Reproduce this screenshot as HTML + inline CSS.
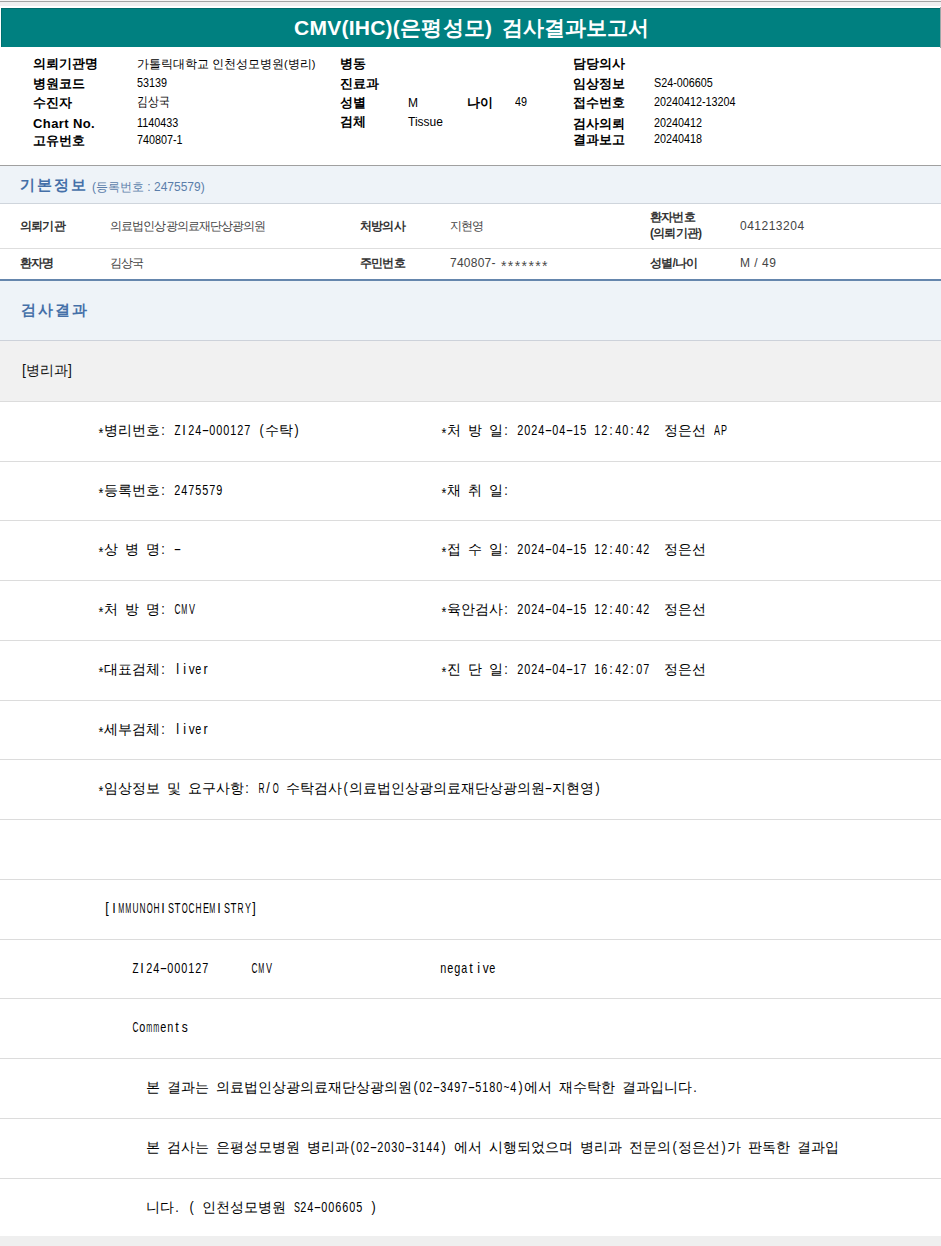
<!DOCTYPE html>
<html><head><meta charset="utf-8"><style>
html,body{margin:0;padding:0;background:#fff;}
body{width:941px;height:1246px;position:relative;overflow:hidden;font-family:"Liberation Sans",sans-serif;}
.m{position:absolute;white-space:nowrap;font-size:14px;}
.m i{display:inline-flex;justify-content:center;width:7px;font-style:normal;white-space:pre;}
.m u{display:inline-flex;justify-content:center;width:14px;text-decoration:none;}
.m s{display:inline-block;flex:none;text-decoration:none;font-family:"Liberation Sans",sans-serif;font-size:15px;transform-origin:50% 0;}
</style></head><body>
<div style="position:absolute;left:0px;top:0px;width:941px;height:1px;background:#f6f4f4"></div>
<div style="position:absolute;left:0px;top:1px;width:941px;height:1px;background:#a3a3a3"></div>
<div style="position:absolute;left:0px;top:2px;width:941px;height:4px;background:#efeff0"></div>
<div style="position:absolute;left:1px;top:8px;width:939px;height:39px;background:#008080"></div>
<div style="position:absolute;left:1px;top:8px;width:939px;height:1px;background:#006c6c"></div>
<div style="position:absolute;left:1px;top:8px;width:1px;height:39px;background:#007070"></div>
<div style="position:absolute;left:940px;top:7px;width:1px;height:41px;background:#9aa8a8"></div>
<div style="position:absolute;left:294px;top:16px;line-height:24px;white-space:pre;color:#fff;font-weight:bold;letter-spacing:0.25px;font-size:21px;"><span style="font-size:21px;font-family:'Liberation Sans',sans-serif">CMV(IHC)(</span><span style="font-size:21px">은평성모</span><span style="font-size:21px;font-family:'Liberation Sans',sans-serif">)</span></div>
<div style="position:absolute;left:502px;top:16px;line-height:24px;white-space:pre;color:#fff;font-weight:bold;letter-spacing:0px;font-size:21px;"><span style="font-size:21px">검사결과보고서</span></div>
<div style="position:absolute;left:33px;top:57px;line-height:14px;white-space:pre;color:#000;font-weight:bold;letter-spacing:0px;font-size:13px;"><span style="font-size:13px">의뢰기관명</span></div>
<div style="position:absolute;left:137px;top:57px;line-height:14px;white-space:pre;color:#000;font-weight:normal;letter-spacing:0px;font-size:12px;"><span style="font-size:12px">가톨릭대학교</span><span style="font-size:11px;font-family:'Liberation Sans',sans-serif"> </span><span style="font-size:12px">인천성모병원</span><span style="font-size:11px;font-family:'Liberation Sans',sans-serif">(</span><span style="font-size:12px">병리</span><span style="font-size:11px;font-family:'Liberation Sans',sans-serif">)</span></div>
<div style="position:absolute;left:33px;top:77px;line-height:14px;white-space:pre;color:#000;font-weight:bold;letter-spacing:0px;font-size:13px;"><span style="font-size:13px">병원코드</span></div>
<div style="position:absolute;left:137px;top:76px;line-height:14px;white-space:pre;color:#000;font-weight:normal;letter-spacing:0px;font-size:13px;transform:scaleX(0.83);transform-origin:0 0;"><span style="font-size:13px;font-family:'Liberation Sans',sans-serif">53139</span></div>
<div style="position:absolute;left:33px;top:96px;line-height:14px;white-space:pre;color:#000;font-weight:bold;letter-spacing:0px;font-size:13px;"><span style="font-size:13px">수진자</span></div>
<div style="position:absolute;left:137px;top:95px;line-height:14px;white-space:pre;color:#000;font-weight:normal;letter-spacing:0px;font-size:13px;transform:scaleX(0.83);transform-origin:0 0;"><span style="font-size:13px">김상국</span></div>
<div style="position:absolute;left:33px;top:117px;line-height:14px;white-space:pre;color:#000;font-weight:bold;letter-spacing:0.4px;font-size:13px;"><span style="font-size:13px;font-family:'Liberation Sans',sans-serif">Chart No.</span></div>
<div style="position:absolute;left:137px;top:116px;line-height:14px;white-space:pre;color:#000;font-weight:normal;letter-spacing:0px;font-size:13px;transform:scaleX(0.83);transform-origin:0 0;"><span style="font-size:13px;font-family:'Liberation Sans',sans-serif">1140433</span></div>
<div style="position:absolute;left:33px;top:134px;line-height:14px;white-space:pre;color:#000;font-weight:bold;letter-spacing:0px;font-size:13px;"><span style="font-size:13px">고유번호</span></div>
<div style="position:absolute;left:137px;top:133px;line-height:14px;white-space:pre;color:#000;font-weight:normal;letter-spacing:0px;font-size:13px;transform:scaleX(0.83);transform-origin:0 0;"><span style="font-size:13px;font-family:'Liberation Sans',sans-serif">740807-1</span></div>
<div style="position:absolute;left:340px;top:57px;line-height:14px;white-space:pre;color:#000;font-weight:bold;letter-spacing:0px;font-size:13px;"><span style="font-size:13px">병동</span></div>
<div style="position:absolute;left:340px;top:77px;line-height:14px;white-space:pre;color:#000;font-weight:bold;letter-spacing:0px;font-size:13px;"><span style="font-size:13px">진료과</span></div>
<div style="position:absolute;left:340px;top:96px;line-height:14px;white-space:pre;color:#000;font-weight:bold;letter-spacing:0px;font-size:13px;"><span style="font-size:13px">성별</span></div>
<div style="position:absolute;left:340px;top:115px;line-height:14px;white-space:pre;color:#000;font-weight:bold;letter-spacing:0px;font-size:13px;"><span style="font-size:13px">검체</span></div>
<div style="position:absolute;left:408px;top:96px;line-height:14px;white-space:pre;color:#000;font-weight:normal;letter-spacing:0px;font-size:12px;"><span style="font-size:12px;font-family:'Liberation Sans',sans-serif">M</span></div>
<div style="position:absolute;left:467px;top:96px;line-height:14px;white-space:pre;color:#000;font-weight:bold;letter-spacing:0px;font-size:13px;"><span style="font-size:13px">나이</span></div>
<div style="position:absolute;left:515px;top:95px;line-height:14px;white-space:pre;color:#000;font-weight:normal;letter-spacing:0px;font-size:13px;transform:scaleX(0.83);transform-origin:0 0;"><span style="font-size:13px;font-family:'Liberation Sans',sans-serif">49</span></div>
<div style="position:absolute;left:408px;top:115px;line-height:14px;white-space:pre;color:#000;font-weight:normal;letter-spacing:0px;font-size:12px;"><span style="font-size:12px;font-family:'Liberation Sans',sans-serif">Tissue</span></div>
<div style="position:absolute;left:573px;top:57px;line-height:14px;white-space:pre;color:#000;font-weight:bold;letter-spacing:0px;font-size:13px;"><span style="font-size:13px">담당의사</span></div>
<div style="position:absolute;left:573px;top:77px;line-height:14px;white-space:pre;color:#000;font-weight:bold;letter-spacing:0px;font-size:13px;"><span style="font-size:13px">임상정보</span></div>
<div style="position:absolute;left:654px;top:76px;line-height:14px;white-space:pre;color:#000;font-weight:normal;letter-spacing:0px;font-size:13px;transform:scaleX(0.83);transform-origin:0 0;"><span style="font-size:13px;font-family:'Liberation Sans',sans-serif">S24-006605</span></div>
<div style="position:absolute;left:573px;top:96px;line-height:14px;white-space:pre;color:#000;font-weight:bold;letter-spacing:0px;font-size:13px;"><span style="font-size:13px">접수번호</span></div>
<div style="position:absolute;left:654px;top:95px;line-height:14px;white-space:pre;color:#000;font-weight:normal;letter-spacing:0px;font-size:13px;transform:scaleX(0.83);transform-origin:0 0;"><span style="font-size:13px;font-family:'Liberation Sans',sans-serif">20240412-13204</span></div>
<div style="position:absolute;left:573px;top:117px;line-height:14px;white-space:pre;color:#000;font-weight:bold;letter-spacing:0px;font-size:13px;"><span style="font-size:13px">검사의뢰</span></div>
<div style="position:absolute;left:654px;top:116px;line-height:14px;white-space:pre;color:#000;font-weight:normal;letter-spacing:0px;font-size:13px;transform:scaleX(0.83);transform-origin:0 0;"><span style="font-size:13px;font-family:'Liberation Sans',sans-serif">20240412</span></div>
<div style="position:absolute;left:573px;top:133px;line-height:14px;white-space:pre;color:#000;font-weight:bold;letter-spacing:0px;font-size:13px;"><span style="font-size:13px">결과보고</span></div>
<div style="position:absolute;left:654px;top:132px;line-height:14px;white-space:pre;color:#000;font-weight:normal;letter-spacing:0px;font-size:13px;transform:scaleX(0.83);transform-origin:0 0;"><span style="font-size:13px;font-family:'Liberation Sans',sans-serif">20240418</span></div>
<div style="position:absolute;left:0px;top:165px;width:941px;height:1px;background:#a0a0a0"></div>
<div style="position:absolute;left:0px;top:166px;width:941px;height:37px;background:#eef3f8"></div>
<div style="position:absolute;left:0px;top:203px;width:941px;height:1px;background:#cfd5dc"></div>
<div style="position:absolute;left:20px;top:177px;line-height:16px;white-space:pre;color:#4570a8;font-weight:bold;letter-spacing:1.9px;font-size:15px;"><span style="font-size:15px">기본정보</span></div>
<div style="position:absolute;left:92px;top:180px;line-height:14px;white-space:pre;color:#5b7eaa;font-weight:normal;letter-spacing:0px;font-size:12px;"><span style="font-size:12px;font-family:'Liberation Sans',sans-serif">(</span><span style="font-size:12px">등록번호</span><span style="font-size:12px;font-family:'Liberation Sans',sans-serif"> : 2475579)</span></div>
<div style="position:absolute;left:0px;top:248px;width:941px;height:1px;background:#dedede"></div>
<div style="position:absolute;left:20px;top:219px;line-height:14px;white-space:pre;color:#333;font-weight:bold;letter-spacing:-0.8px;font-size:12px;"><span style="font-size:12px">의뢰기관</span></div>
<div style="position:absolute;left:110px;top:219px;line-height:14px;white-space:pre;color:#444;font-weight:normal;letter-spacing:-0.9px;font-size:12px;"><span style="font-size:12px">의료법인상광의료재단상광의원</span></div>
<div style="position:absolute;left:360px;top:219px;line-height:14px;white-space:pre;color:#333;font-weight:bold;letter-spacing:-0.8px;font-size:12px;"><span style="font-size:12px">처방의사</span></div>
<div style="position:absolute;left:450px;top:219px;line-height:14px;white-space:pre;color:#444;font-weight:normal;letter-spacing:-0.9px;font-size:12px;"><span style="font-size:12px">지현영</span></div>
<div style="position:absolute;left:650px;top:210px;line-height:14px;white-space:pre;color:#333;font-weight:bold;letter-spacing:-0.8px;font-size:12px;"><span style="font-size:12px">환자번호</span></div>
<div style="position:absolute;left:650px;top:226px;line-height:14px;white-space:pre;color:#333;font-weight:bold;letter-spacing:-0.8px;font-size:12px;"><span style="font-size:12px;font-family:'Liberation Sans',sans-serif">(</span><span style="font-size:12px">의뢰기관</span><span style="font-size:12px;font-family:'Liberation Sans',sans-serif">)</span></div>
<div style="position:absolute;left:740px;top:219px;line-height:14px;white-space:pre;color:#444;font-weight:normal;letter-spacing:0.5px;font-size:12px;"><span style="font-size:12px;font-family:'Liberation Sans',sans-serif">041213204</span></div>
<div style="position:absolute;left:20px;top:256px;line-height:14px;white-space:pre;color:#333;font-weight:bold;letter-spacing:-0.8px;font-size:12px;"><span style="font-size:12px">환자명</span></div>
<div style="position:absolute;left:110px;top:256px;line-height:14px;white-space:pre;color:#444;font-weight:normal;letter-spacing:-0.9px;font-size:12px;"><span style="font-size:12px">김상국</span></div>
<div style="position:absolute;left:360px;top:256px;line-height:14px;white-space:pre;color:#333;font-weight:bold;letter-spacing:-0.8px;font-size:12px;"><span style="font-size:12px">주민번호</span></div>
<div style="position:absolute;left:450px;top:256px;line-height:14px;white-space:pre;color:#444;font-weight:normal;letter-spacing:0.25px;font-size:12px;"><span style="font-size:12px;font-family:'Liberation Sans',sans-serif">740807-</span></div>
<div style="position:absolute;left:501px;top:259px;line-height:14px;white-space:pre;color:#4a4a4a;font-weight:normal;letter-spacing:1.4px;font-size:11.25px;"><span style="font-size:14px;font-family:'Liberation Sans',sans-serif">*******</span></div>
<div style="position:absolute;left:650px;top:256px;line-height:14px;white-space:pre;color:#333;font-weight:bold;letter-spacing:-0.8px;font-size:12px;"><span style="font-size:12px">성별</span><span style="font-size:12px;font-family:'Liberation Sans',sans-serif">/</span><span style="font-size:12px">나이</span></div>
<div style="position:absolute;left:740px;top:256px;line-height:14px;white-space:pre;color:#444;font-weight:normal;letter-spacing:0.5px;font-size:12px;"><span style="font-size:12px;font-family:'Liberation Sans',sans-serif">M / 49</span></div>
<div style="position:absolute;left:0px;top:279px;width:941px;height:2px;background:#6586ad"></div>
<div style="position:absolute;left:0px;top:281px;width:941px;height:59px;background:#eef3f8"></div>
<div style="position:absolute;left:0px;top:340px;width:941px;height:1px;background:#cdd2da"></div>
<div style="position:absolute;left:21px;top:302px;line-height:16px;white-space:pre;color:#4570a8;font-weight:bold;letter-spacing:1.9px;font-size:15px;"><span style="font-size:15px">검사결과</span></div>
<div style="position:absolute;left:0px;top:341px;width:941px;height:60px;background:#f1f1f1"></div>
<div style="position:absolute;left:22px;top:362px;line-height:16px;white-space:pre;color:#111;font-weight:normal;letter-spacing:0px;font-size:14px;"><span style="font-size:14px;font-family:'Liberation Sans',sans-serif">[</span><span style="font-size:14px">병리과</span><span style="font-size:14px;font-family:'Liberation Sans',sans-serif">]</span></div>
<div style="position:absolute;left:0px;top:401px;width:941px;height:1px;background:#dcdcdc"></div>
<div style="position:absolute;left:0px;top:461px;width:941px;height:1px;background:#dcdcdc"></div>
<div style="position:absolute;left:0px;top:520px;width:941px;height:1px;background:#dcdcdc"></div>
<div style="position:absolute;left:0px;top:580px;width:941px;height:1px;background:#dcdcdc"></div>
<div style="position:absolute;left:0px;top:640px;width:941px;height:1px;background:#dcdcdc"></div>
<div style="position:absolute;left:0px;top:700px;width:941px;height:1px;background:#dcdcdc"></div>
<div style="position:absolute;left:0px;top:759px;width:941px;height:1px;background:#dcdcdc"></div>
<div style="position:absolute;left:0px;top:819px;width:941px;height:1px;background:#dcdcdc"></div>
<div style="position:absolute;left:0px;top:879px;width:941px;height:1px;background:#dcdcdc"></div>
<div style="position:absolute;left:0px;top:939px;width:941px;height:1px;background:#dcdcdc"></div>
<div style="position:absolute;left:0px;top:998px;width:941px;height:1px;background:#dcdcdc"></div>
<div style="position:absolute;left:0px;top:1058px;width:941px;height:1px;background:#dcdcdc"></div>
<div style="position:absolute;left:0px;top:1118px;width:941px;height:1px;background:#dcdcdc"></div>
<div style="position:absolute;left:0px;top:1178px;width:941px;height:1px;background:#dcdcdc"></div>
<div style="position:absolute;left:0px;top:1236px;width:941px;height:10px;background:#efefef"></div>
<div class="m" style="left:97px;top:423px;line-height:14px;color:#000"><i><s style="transform:scaleX(0.84) translateY(3px)">*</s></i><u>병</u><u>리</u><u>번</u><u>호</u><i><s style="transform:scaleX(0.84)">:</s></i><i> </i><i><s style="transform:scaleX(0.652)">Z</s></i><i><s style="transform:scaleX(0.84)">I</s></i><i><s style="transform:scaleX(0.723)">2</s></i><i><s style="transform:scaleX(0.723)">4</s></i><i><s style="transform:scaleX(1.5)">-</s></i><i><s style="transform:scaleX(0.723)">0</s></i><i><s style="transform:scaleX(0.723)">0</s></i><i><s style="transform:scaleX(0.723)">0</s></i><i><s style="transform:scaleX(0.723)">1</s></i><i><s style="transform:scaleX(0.723)">2</s></i><i><s style="transform:scaleX(0.723)">7</s></i><i> </i><i><s style="transform:scaleX(0.84)">(</s></i><u>수</u><u>탁</u><i><s style="transform:scaleX(0.84)">)</s></i></div>
<div class="m" style="left:440px;top:423px;line-height:14px;color:#000"><i><s style="transform:scaleX(0.84) translateY(3px)">*</s></i><u>처</u><i> </i><u>방</u><i> </i><u>일</u><i><s style="transform:scaleX(0.84)">:</s></i><i> </i><i><s style="transform:scaleX(0.723)">2</s></i><i><s style="transform:scaleX(0.723)">0</s></i><i><s style="transform:scaleX(0.723)">2</s></i><i><s style="transform:scaleX(0.723)">4</s></i><i><s style="transform:scaleX(1.5)">-</s></i><i><s style="transform:scaleX(0.723)">0</s></i><i><s style="transform:scaleX(0.723)">4</s></i><i><s style="transform:scaleX(1.5)">-</s></i><i><s style="transform:scaleX(0.723)">1</s></i><i><s style="transform:scaleX(0.723)">5</s></i><i> </i><i><s style="transform:scaleX(0.723)">1</s></i><i><s style="transform:scaleX(0.723)">2</s></i><i><s style="transform:scaleX(0.84)">:</s></i><i><s style="transform:scaleX(0.723)">4</s></i><i><s style="transform:scaleX(0.723)">0</s></i><i><s style="transform:scaleX(0.84)">:</s></i><i><s style="transform:scaleX(0.723)">4</s></i><i><s style="transform:scaleX(0.723)">2</s></i><i> </i><i> </i><u>정</u><u>은</u><u>선</u><i> </i><i><s style="transform:scaleX(0.6)">A</s></i><i><s style="transform:scaleX(0.6)">P</s></i></div>
<div class="m" style="left:97px;top:483px;line-height:14px;color:#000"><i><s style="transform:scaleX(0.84) translateY(3px)">*</s></i><u>등</u><u>록</u><u>번</u><u>호</u><i><s style="transform:scaleX(0.84)">:</s></i><i> </i><i><s style="transform:scaleX(0.723)">2</s></i><i><s style="transform:scaleX(0.723)">4</s></i><i><s style="transform:scaleX(0.723)">7</s></i><i><s style="transform:scaleX(0.723)">5</s></i><i><s style="transform:scaleX(0.723)">5</s></i><i><s style="transform:scaleX(0.723)">7</s></i><i><s style="transform:scaleX(0.723)">9</s></i></div>
<div class="m" style="left:440px;top:483px;line-height:14px;color:#000"><i><s style="transform:scaleX(0.84) translateY(3px)">*</s></i><u>채</u><i> </i><u>취</u><i> </i><u>일</u><i><s style="transform:scaleX(0.84)">:</s></i></div>
<div class="m" style="left:97px;top:542px;line-height:14px;color:#000"><i><s style="transform:scaleX(0.84) translateY(3px)">*</s></i><u>상</u><i> </i><u>병</u><i> </i><u>명</u><i><s style="transform:scaleX(0.84)">:</s></i><i> </i><i><s style="transform:scaleX(1.5)">-</s></i></div>
<div class="m" style="left:440px;top:542px;line-height:14px;color:#000"><i><s style="transform:scaleX(0.84) translateY(3px)">*</s></i><u>접</u><i> </i><u>수</u><i> </i><u>일</u><i><s style="transform:scaleX(0.84)">:</s></i><i> </i><i><s style="transform:scaleX(0.723)">2</s></i><i><s style="transform:scaleX(0.723)">0</s></i><i><s style="transform:scaleX(0.723)">2</s></i><i><s style="transform:scaleX(0.723)">4</s></i><i><s style="transform:scaleX(1.5)">-</s></i><i><s style="transform:scaleX(0.723)">0</s></i><i><s style="transform:scaleX(0.723)">4</s></i><i><s style="transform:scaleX(1.5)">-</s></i><i><s style="transform:scaleX(0.723)">1</s></i><i><s style="transform:scaleX(0.723)">5</s></i><i> </i><i><s style="transform:scaleX(0.723)">1</s></i><i><s style="transform:scaleX(0.723)">2</s></i><i><s style="transform:scaleX(0.84)">:</s></i><i><s style="transform:scaleX(0.723)">4</s></i><i><s style="transform:scaleX(0.723)">0</s></i><i><s style="transform:scaleX(0.84)">:</s></i><i><s style="transform:scaleX(0.723)">4</s></i><i><s style="transform:scaleX(0.723)">2</s></i><i> </i><i> </i><u>정</u><u>은</u><u>선</u></div>
<div class="m" style="left:97px;top:602px;line-height:14px;color:#000"><i><s style="transform:scaleX(0.84) translateY(3px)">*</s></i><u>처</u><i> </i><u>방</u><i> </i><u>명</u><i><s style="transform:scaleX(0.84)">:</s></i><i> </i><i><s style="transform:scaleX(0.556)">C</s></i><i><s style="transform:scaleX(0.48)">M</s></i><i><s style="transform:scaleX(0.6)">V</s></i></div>
<div class="m" style="left:440px;top:602px;line-height:14px;color:#000"><i><s style="transform:scaleX(0.84) translateY(3px)">*</s></i><u>육</u><u>안</u><u>검</u><u>사</u><i><s style="transform:scaleX(0.84)">:</s></i><i> </i><i><s style="transform:scaleX(0.723)">2</s></i><i><s style="transform:scaleX(0.723)">0</s></i><i><s style="transform:scaleX(0.723)">2</s></i><i><s style="transform:scaleX(0.723)">4</s></i><i><s style="transform:scaleX(1.5)">-</s></i><i><s style="transform:scaleX(0.723)">0</s></i><i><s style="transform:scaleX(0.723)">4</s></i><i><s style="transform:scaleX(1.5)">-</s></i><i><s style="transform:scaleX(0.723)">1</s></i><i><s style="transform:scaleX(0.723)">5</s></i><i> </i><i><s style="transform:scaleX(0.723)">1</s></i><i><s style="transform:scaleX(0.723)">2</s></i><i><s style="transform:scaleX(0.84)">:</s></i><i><s style="transform:scaleX(0.723)">4</s></i><i><s style="transform:scaleX(0.723)">0</s></i><i><s style="transform:scaleX(0.84)">:</s></i><i><s style="transform:scaleX(0.723)">4</s></i><i><s style="transform:scaleX(0.723)">2</s></i><i> </i><i> </i><u>정</u><u>은</u><u>선</u></div>
<div class="m" style="left:97px;top:662px;line-height:14px;color:#000"><i><s style="transform:scaleX(0.84) translateY(3px)">*</s></i><u>대</u><u>표</u><u>검</u><u>체</u><i><s style="transform:scaleX(0.84)">:</s></i><i> </i><i><s style="transform:scaleX(0.84)">l</s></i><i><s style="transform:scaleX(0.84)">i</s></i><i><s style="transform:scaleX(0.8)">v</s></i><i><s style="transform:scaleX(0.723)">e</s></i><i><s style="transform:scaleX(0.84)">r</s></i></div>
<div class="m" style="left:440px;top:662px;line-height:14px;color:#000"><i><s style="transform:scaleX(0.84) translateY(3px)">*</s></i><u>진</u><i> </i><u>단</u><i> </i><u>일</u><i><s style="transform:scaleX(0.84)">:</s></i><i> </i><i><s style="transform:scaleX(0.723)">2</s></i><i><s style="transform:scaleX(0.723)">0</s></i><i><s style="transform:scaleX(0.723)">2</s></i><i><s style="transform:scaleX(0.723)">4</s></i><i><s style="transform:scaleX(1.5)">-</s></i><i><s style="transform:scaleX(0.723)">0</s></i><i><s style="transform:scaleX(0.723)">4</s></i><i><s style="transform:scaleX(1.5)">-</s></i><i><s style="transform:scaleX(0.723)">1</s></i><i><s style="transform:scaleX(0.723)">7</s></i><i> </i><i><s style="transform:scaleX(0.723)">1</s></i><i><s style="transform:scaleX(0.723)">6</s></i><i><s style="transform:scaleX(0.84)">:</s></i><i><s style="transform:scaleX(0.723)">4</s></i><i><s style="transform:scaleX(0.723)">2</s></i><i><s style="transform:scaleX(0.84)">:</s></i><i><s style="transform:scaleX(0.723)">0</s></i><i><s style="transform:scaleX(0.723)">7</s></i><i> </i><i> </i><u>정</u><u>은</u><u>선</u></div>
<div class="m" style="left:97px;top:722px;line-height:14px;color:#000"><i><s style="transform:scaleX(0.84) translateY(3px)">*</s></i><u>세</u><u>부</u><u>검</u><u>체</u><i><s style="transform:scaleX(0.84)">:</s></i><i> </i><i><s style="transform:scaleX(0.84)">l</s></i><i><s style="transform:scaleX(0.84)">i</s></i><i><s style="transform:scaleX(0.8)">v</s></i><i><s style="transform:scaleX(0.723)">e</s></i><i><s style="transform:scaleX(0.84)">r</s></i></div>
<div class="m" style="left:97px;top:781px;line-height:14px;color:#000"><i><s style="transform:scaleX(0.84) translateY(3px)">*</s></i><u>임</u><u>상</u><u>정</u><u>보</u><i> </i><u>및</u><i> </i><u>요</u><u>구</u><u>사</u><u>항</u><i><s style="transform:scaleX(0.84)">:</s></i><i> </i><i><s style="transform:scaleX(0.556)">R</s></i><i><s style="transform:scaleX(0.84)">/</s></i><i><s style="transform:scaleX(0.513)">O</s></i><i> </i><u>수</u><u>탁</u><u>검</u><u>사</u><i><s style="transform:scaleX(0.84)">(</s></i><u>의</u><u>료</u><u>법</u><u>인</u><u>상</u><u>광</u><u>의</u><u>료</u><u>재</u><u>단</u><u>상</u><u>광</u><u>의</u><u>원</u><i><s style="transform:scaleX(1.5)">-</s></i><u>지</u><u>현</u><u>영</u><i><s style="transform:scaleX(0.84)">)</s></i></div>
<div class="m" style="left:104px;top:901px;line-height:14px;color:#000"><i><s style="transform:scaleX(0.84)">[</s></i><i><s style="transform:scaleX(0.84)">I</s></i><i><s style="transform:scaleX(0.48)">M</s></i><i><s style="transform:scaleX(0.48)">M</s></i><i><s style="transform:scaleX(0.556)">U</s></i><i><s style="transform:scaleX(0.556)">N</s></i><i><s style="transform:scaleX(0.513)">O</s></i><i><s style="transform:scaleX(0.556)">H</s></i><i><s style="transform:scaleX(0.84)">I</s></i><i><s style="transform:scaleX(0.6)">S</s></i><i><s style="transform:scaleX(0.652)">T</s></i><i><s style="transform:scaleX(0.513)">O</s></i><i><s style="transform:scaleX(0.556)">C</s></i><i><s style="transform:scaleX(0.556)">H</s></i><i><s style="transform:scaleX(0.6)">E</s></i><i><s style="transform:scaleX(0.48)">M</s></i><i><s style="transform:scaleX(0.84)">I</s></i><i><s style="transform:scaleX(0.6)">S</s></i><i><s style="transform:scaleX(0.652)">T</s></i><i><s style="transform:scaleX(0.556)">R</s></i><i><s style="transform:scaleX(0.6)">Y</s></i><i><s style="transform:scaleX(0.84)">]</s></i></div>
<div class="m" style="left:132px;top:961px;line-height:14px;color:#000"><i><s style="transform:scaleX(0.652)">Z</s></i><i><s style="transform:scaleX(0.84)">I</s></i><i><s style="transform:scaleX(0.723)">2</s></i><i><s style="transform:scaleX(0.723)">4</s></i><i><s style="transform:scaleX(1.5)">-</s></i><i><s style="transform:scaleX(0.723)">0</s></i><i><s style="transform:scaleX(0.723)">0</s></i><i><s style="transform:scaleX(0.723)">0</s></i><i><s style="transform:scaleX(0.723)">1</s></i><i><s style="transform:scaleX(0.723)">2</s></i><i><s style="transform:scaleX(0.723)">7</s></i><i> </i><i> </i><i> </i><i> </i><i> </i><i> </i><i><s style="transform:scaleX(0.556)">C</s></i><i><s style="transform:scaleX(0.48)">M</s></i><i><s style="transform:scaleX(0.6)">V</s></i><i> </i><i> </i><i> </i><i> </i><i> </i><i> </i><i> </i><i> </i><i> </i><i> </i><i> </i><i> </i><i> </i><i> </i><i> </i><i> </i><i> </i><i> </i><i> </i><i> </i><i> </i><i> </i><i> </i><i> </i><i><s style="transform:scaleX(0.723)">n</s></i><i><s style="transform:scaleX(0.723)">e</s></i><i><s style="transform:scaleX(0.723)">g</s></i><i><s style="transform:scaleX(0.714)">a</s></i><i><s style="transform:scaleX(0.84)">t</s></i><i><s style="transform:scaleX(0.84)">i</s></i><i><s style="transform:scaleX(0.8)">v</s></i><i><s style="transform:scaleX(0.723)">e</s></i></div>
<div class="m" style="left:132px;top:1020px;line-height:14px;color:#000"><i><s style="transform:scaleX(0.556)">C</s></i><i><s style="transform:scaleX(0.723)">o</s></i><i><s style="transform:scaleX(0.48)">m</s></i><i><s style="transform:scaleX(0.48)">m</s></i><i><s style="transform:scaleX(0.723)">e</s></i><i><s style="transform:scaleX(0.723)">n</s></i><i><s style="transform:scaleX(0.84)">t</s></i><i><s style="transform:scaleX(0.8)">s</s></i></div>
<div class="m" style="left:146px;top:1080px;line-height:14px;color:#000"><u>본</u><i> </i><u>결</u><u>과</u><u>는</u><i> </i><u>의</u><u>료</u><u>법</u><u>인</u><u>상</u><u>광</u><u>의</u><u>료</u><u>재</u><u>단</u><u>상</u><u>광</u><u>의</u><u>원</u><i><s style="transform:scaleX(0.84)">(</s></i><i><s style="transform:scaleX(0.723)">0</s></i><i><s style="transform:scaleX(0.723)">2</s></i><i><s style="transform:scaleX(1.5)">-</s></i><i><s style="transform:scaleX(0.723)">3</s></i><i><s style="transform:scaleX(0.723)">4</s></i><i><s style="transform:scaleX(0.723)">9</s></i><i><s style="transform:scaleX(0.723)">7</s></i><i><s style="transform:scaleX(1.5)">-</s></i><i><s style="transform:scaleX(0.723)">5</s></i><i><s style="transform:scaleX(0.723)">1</s></i><i><s style="transform:scaleX(0.723)">8</s></i><i><s style="transform:scaleX(0.723)">0</s></i><i><s style="transform:scaleX(0.682)">~</s></i><i><s style="transform:scaleX(0.723)">4</s></i><i><s style="transform:scaleX(0.84)">)</s></i><u>에</u><u>서</u><i> </i><u>재</u><u>수</u><u>탁</u><u>한</u><i> </i><u>결</u><u>과</u><u>입</u><u>니</u><u>다</u><i><s style="transform:scaleX(0.84)">.</s></i></div>
<div class="m" style="left:146px;top:1140px;line-height:14px;color:#000"><u>본</u><i> </i><u>검</u><u>사</u><u>는</u><i> </i><u>은</u><u>평</u><u>성</u><u>모</u><u>병</u><u>원</u><i> </i><u>병</u><u>리</u><u>과</u><i><s style="transform:scaleX(0.84)">(</s></i><i><s style="transform:scaleX(0.723)">0</s></i><i><s style="transform:scaleX(0.723)">2</s></i><i><s style="transform:scaleX(1.5)">-</s></i><i><s style="transform:scaleX(0.723)">2</s></i><i><s style="transform:scaleX(0.723)">0</s></i><i><s style="transform:scaleX(0.723)">3</s></i><i><s style="transform:scaleX(0.723)">0</s></i><i><s style="transform:scaleX(1.5)">-</s></i><i><s style="transform:scaleX(0.723)">3</s></i><i><s style="transform:scaleX(0.723)">1</s></i><i><s style="transform:scaleX(0.723)">4</s></i><i><s style="transform:scaleX(0.723)">4</s></i><i><s style="transform:scaleX(0.84)">)</s></i><i> </i><u>에</u><u>서</u><i> </i><u>시</u><u>행</u><u>되</u><u>었</u><u>으</u><u>며</u><i> </i><u>병</u><u>리</u><u>과</u><i> </i><u>전</u><u>문</u><u>의</u><i><s style="transform:scaleX(0.84)">(</s></i><u>정</u><u>은</u><u>선</u><i><s style="transform:scaleX(0.84)">)</s></i><u>가</u><i> </i><u>판</u><u>독</u><u>한</u><i> </i><u>결</u><u>과</u><u>입</u></div>
<div class="m" style="left:146px;top:1200px;line-height:14px;color:#000"><u>니</u><u>다</u><i><s style="transform:scaleX(0.84)">.</s></i><i> </i><i><s style="transform:scaleX(0.84)">(</s></i><i> </i><u>인</u><u>천</u><u>성</u><u>모</u><u>병</u><u>원</u><i> </i><i><s style="transform:scaleX(0.6)">S</s></i><i><s style="transform:scaleX(0.723)">2</s></i><i><s style="transform:scaleX(0.723)">4</s></i><i><s style="transform:scaleX(1.5)">-</s></i><i><s style="transform:scaleX(0.723)">0</s></i><i><s style="transform:scaleX(0.723)">0</s></i><i><s style="transform:scaleX(0.723)">6</s></i><i><s style="transform:scaleX(0.723)">6</s></i><i><s style="transform:scaleX(0.723)">0</s></i><i><s style="transform:scaleX(0.723)">5</s></i><i> </i><i><s style="transform:scaleX(0.84)">)</s></i></div>
</body></html>
